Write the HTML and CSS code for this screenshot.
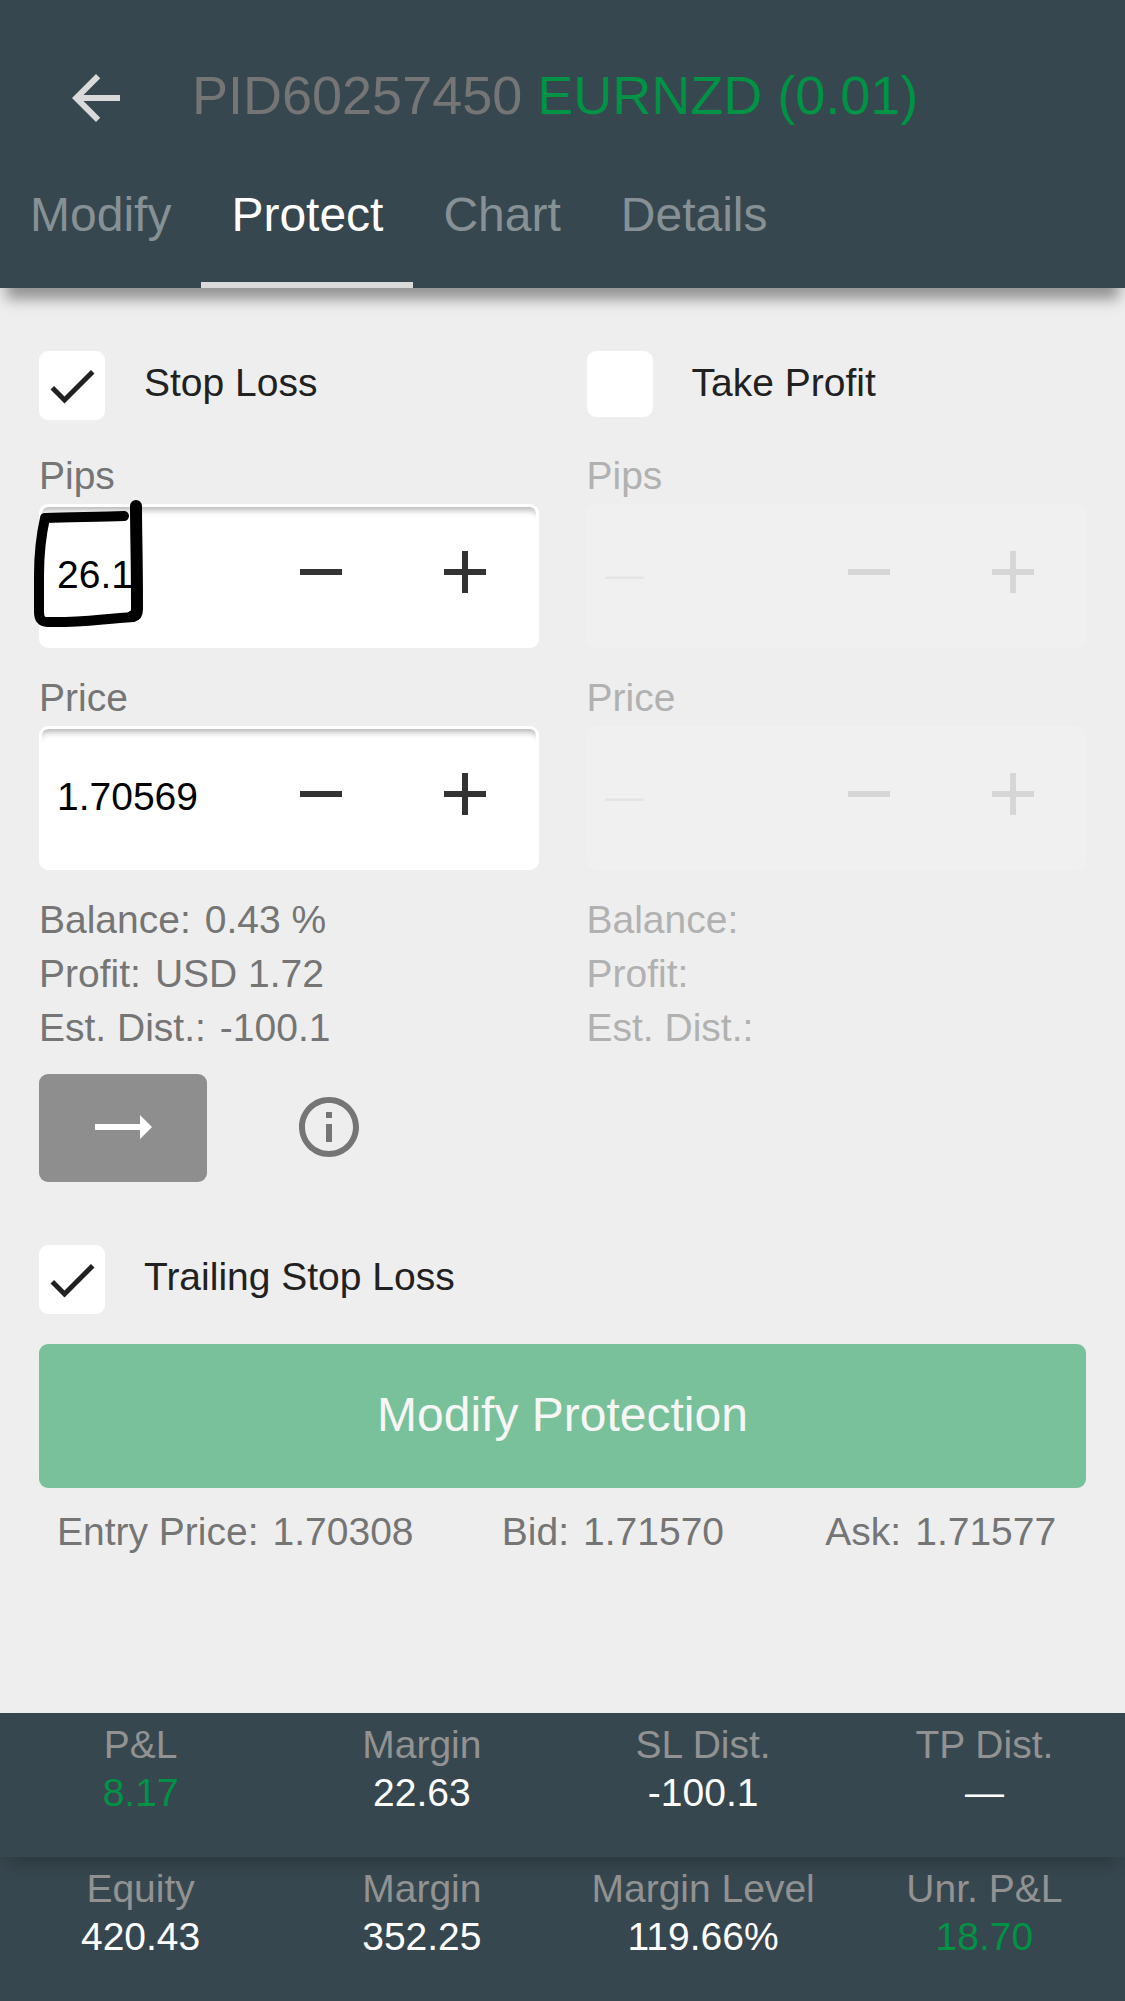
FILE: index.html
```html
<!DOCTYPE html>
<html lang="en">
<head>
  <meta charset="UTF-8">
  <meta name="viewport" content="width=device-width, initial-scale=1.0">
  <title>Protect position</title>
  <link rel="stylesheet" href="styles.css">
</head>
<body>
  <header class="header">
    <div class="toolbar">
      <button class="back" type="button" aria-label="Back">
        <svg class="icon" viewBox="0 0 24 24"><path d="M20 11H7.83l5.59-5.59L12 4l-8 8 8 8 1.41-1.41L7.83 13H20v-2z"/></svg>
      </button>
      <h1 class="title">PID60257450 <span class="green">EURNZD (0.01)</span></h1>
    </div>
    <nav class="tabs">
      <a class="tab" href="#modify">Modify</a>
      <a class="tab active" href="#protect">Protect</a>
      <a class="tab" href="#chart">Chart</a>
      <a class="tab" href="#details">Details</a>
    </nav>
  </header>

  <main class="main">
    <div class="columns">
      <section>
        <label class="check">
          <span class="box">
            <input type="checkbox" checked>
            <svg viewBox="0 0 24 24"><path d="M9 16.17L4.83 12l-1.42 1.41L9 19 21 7l-1.41-1.41z"/></svg>
          </span>
          Stop Loss
        </label>

        <label class="label" for="sl-pips">Pips</label>
        <div class="stepper">
          <input type="text" id="sl-pips" value="26.1">
          <button type="button" aria-label="Decrease pips"><svg class="icon" viewBox="0 0 24 24"><path d="M5 11h14v2H5z"/></svg></button>
          <button type="button" aria-label="Increase pips"><svg class="icon" viewBox="0 0 24 24"><path d="M19 13h-6v6h-2v-6H5v-2h6V5h2v6h6z"/></svg></button>
          <!-- hand drawn marker round the value -->
          <svg class="marker" viewBox="0 0 120 140">
            <path class="thin" d="M94 21 C70 22 45 22 15 23 Q9 50 9 80 L9 117 Q9 127 17 127 C50 128 70 124 103 122"/>
            <path class="thick" d="M106 11 C106 40 107 60 107 114 Q107 120 103 121"/>
          </svg>
        </div>

        <label class="label" for="sl-price">Price</label>
        <div class="stepper">
          <input type="text" id="sl-price" value="1.70569">
          <button type="button" aria-label="Decrease price"><svg class="icon" viewBox="0 0 24 24"><path d="M5 11h14v2H5z"/></svg></button>
          <button type="button" aria-label="Increase price"><svg class="icon" viewBox="0 0 24 24"><path d="M19 13h-6v6h-2v-6H5v-2h6V5h2v6h6z"/></svg></button>
        </div>

        <div class="info-line"><span>Balance:</span><span>0.43 %</span></div>
        <div class="info-line"><span>Profit:</span><span>USD 1.72</span></div>
        <div class="info-line"><span>Est. Dist.:</span><span>-100.1</span></div>

        <div class="actions">
          <button class="move" type="button" aria-label="Move stop loss">
            <svg class="icon" viewBox="0 0 24 24"><path d="M22 12l-4-4v3H3v2h15v3z"/></svg>
          </button>
          <button class="help" type="button" aria-label="Info">
            <svg class="icon" viewBox="0 0 24 24"><path d="M11 7h2v2h-2zm0 4h2v6h-2zm1-9C6.48 2 2 6.48 2 12s4.48 10 10 10 10-4.48 10-10S17.52 2 12 2zm0 18c-4.41 0-8-3.59-8-8s3.59-8 8-8 8 3.59 8 8-3.59 8-8 8z"/></svg>
          </button>
        </div>
      </section>

      <section class="off">
        <label class="check">
          <span class="box"><input type="checkbox"></span>
          Take Profit
        </label>

        <label class="label" for="tp-pips">Pips</label>
        <div class="stepper">
          <input type="text" id="tp-pips" value="—" disabled>
          <button type="button" aria-label="Decrease pips" disabled><svg class="icon" viewBox="0 0 24 24"><path d="M5 11h14v2H5z"/></svg></button>
          <button type="button" aria-label="Increase pips" disabled><svg class="icon" viewBox="0 0 24 24"><path d="M19 13h-6v6h-2v-6H5v-2h6V5h2v6h6z"/></svg></button>
        </div>

        <label class="label" for="tp-price">Price</label>
        <div class="stepper">
          <input type="text" id="tp-price" value="—" disabled>
          <button type="button" aria-label="Decrease price" disabled><svg class="icon" viewBox="0 0 24 24"><path d="M5 11h14v2H5z"/></svg></button>
          <button type="button" aria-label="Increase price" disabled><svg class="icon" viewBox="0 0 24 24"><path d="M19 13h-6v6h-2v-6H5v-2h6V5h2v6h6z"/></svg></button>
        </div>

        <div class="info-line"><span>Balance:</span></div>
        <div class="info-line"><span>Profit:</span></div>
        <div class="info-line"><span>Est. Dist.:</span></div>
      </section>
    </div>

    <label class="check">
      <span class="box">
        <input type="checkbox" checked>
        <svg viewBox="0 0 24 24"><path d="M9 16.17L4.83 12l-1.42 1.41L9 19 21 7l-1.41-1.41z"/></svg>
      </span>
      Trailing Stop Loss
    </label>

    <button class="submit" type="button" disabled>Modify Protection</button>

    <div class="prices">
      <div class="info-line"><span>Entry Price:</span><span>1.70308</span></div>
      <div class="info-line"><span>Bid:</span><span>1.71570</span></div>
      <div class="info-line"><span>Ask:</span><span>1.71577</span></div>
    </div>
  </main>

  <footer>
    <div class="stats position">
      <div><div class="name">P&amp;L</div><div class="green">8.17</div></div>
      <div><div class="name">Margin</div><div>22.63</div></div>
      <div><div class="name">SL Dist.</div><div>-100.1</div></div>
      <div><div class="name">TP Dist.</div><div>—</div></div>
    </div>
    <div class="stats">
      <div><div class="name">Equity</div><div>420.43</div></div>
      <div><div class="name">Margin</div><div>352.25</div></div>
      <div><div class="name">Margin Level</div><div>119.66%</div></div>
      <div><div class="name">Unr. P&amp;L</div><div class="green">18.70</div></div>
    </div>
  </footer>
</body>
</html>
```
FILE: styles.css
```css
* {
  box-sizing: border-box;
}

body {
  margin: 0;
  min-height: 100vh;
  display: flex;
  flex-direction: column;
  background-color: #eee;
  color: #757575;
  font-family: "Liberation Sans", Arial, sans-serif;
  font-size: 39px;
}

button, input {
  font: inherit;
  border: none;
  padding: 0;
  margin: 0;
}

button {
  display: flex;
  align-items: center;
  justify-content: center;
  background: none;
}

.icon {
  width: 72px;
  height: 72px;
  fill: currentColor;
  display: block;
}

.green {
  color: #009245;
}

/* header */
.header {
  background-color: #37474f;
  padding-top: 50px;
  box-shadow: 0 18px 12px -7px rgba(0,0,0,0.32), 0 6px 24px rgba(0,0,0,0.12);
}

.toolbar {
  display: flex;
  align-items: center;
  gap: 60px;
  height: 96px;
  padding-left: 60px;
}

.back {
  color: #dadada;
}

.title {
  margin: 0;
  padding-bottom: 6px;
  font-size: 54px;
  font-weight: normal;
}

.tabs {
  display: flex;
}

.tab {
  height: 142px;
  line-height: 138px;
  padding: 0 30px;
  font-size: 48px;
  color: #879195;
  text-decoration: none;
  border-bottom: 6px solid transparent;
}

.tab.active {
  color: #fff;
  border-color: #dadada;
}

/* form */
.main {
  flex: 1;
  padding: 63px 39px 0;
}

.columns {
  display: grid;
  grid-template-columns: repeat(2, minmax(0, 1fr));
  gap: 48px;
  margin-bottom: 63px;
}

.check {
  display: flex;
  gap: 39px;
  min-height: 69px;
  margin-bottom: 30px;
  line-height: 64px;
  color: #212121;
}

.box {
  display: grid;
  place-items: center;
  align-self: flex-start;
}

.box input {
  appearance: none;
  grid-area: 1 / 1;
  width: 66px;
  height: 66px;
  background-color: #fff;
  border-radius: 9px;
}

.box input:checked {
  height: 69px;
}

.box svg {
  grid-area: 1 / 1;
  width: 60px;
  height: 60px;
  fill: #212121;
  pointer-events: none;
}

.label {
  display: block;
  line-height: 51px;
  margin-bottom: 3px;
}

.stepper {
  position: relative;
  display: flex;
  gap: 3px;
  height: 144px;
  margin-bottom: 23px;
  border: 3px solid #fff;
  border-radius: 9px;
  background-color: #fff;
  box-shadow: inset 0 9px 6px -6px rgba(0,0,0,0.3);
}

.stepper + .label {
  margin-top: 24px;
}

.stepper input {
  flex: 1;
  min-width: 0;
  padding: 0 0 3px 15px;
  background: none;
  color: #000;
}

.stepper button {
  width: 141px;
  padding-bottom: 8px;
  color: #333;
}

.marker {
  position: absolute;
  left: -12px;
  top: -12px;
  width: 120px;
  height: 140px;
  fill: none;
  stroke: #000;
  stroke-linecap: round;
  stroke-linejoin: round;
  pointer-events: none;
}

.marker .thin {
  stroke-width: 10px;
}

.marker .thick {
  stroke-width: 12px;
}

.info-line {
  display: flex;
  gap: 14px;
  line-height: 54px;
}

.off .label, .off .info-line {
  color: #b1b1b1;
}

.off .stepper {
  background-color: #f0f0f0;
  border-color: #f0f0f0;
  box-shadow: none;
}

.off .stepper input {
  color: #e5e5e5;
}

.off .stepper button {
  color: #d6d6d6;
}

.actions {
  display: flex;
  gap: 38px;
  margin-top: 19px;
}

.actions button {
  width: 168px;
  height: 108px;
  padding-bottom: 3px;
}

.actions .move {
  padding-right: 3px;
  background-color: #8e8e8e;
  color: #fff;
  border-radius: 9px;
}

.help {
  color: #757575;
}

.submit {
  width: 100%;
  height: 144px;
  padding-bottom: 3px;
  background-color: #79c19b;
  color: #f6f6f6;
  font-size: 48px;
  border-radius: 9px;
}

.prices {
  display: grid;
  grid-template-columns: 11fr 8fr 6fr;
  padding: 17px 18px 24px;
}

/* account summary */
.stats {
  display: grid;
  grid-template-columns: repeat(4, 1fr);
  height: 144px;
  padding-top: 8px;
  line-height: 48px;
  text-align: center;
  background-color: #37474f;
  color: #fff;
}

.stats .name {
  color: #929292;
}

.stats.position {
  position: relative;
  box-shadow: 0 12px 18px -8px rgba(0,0,0,0.3);
}
```
